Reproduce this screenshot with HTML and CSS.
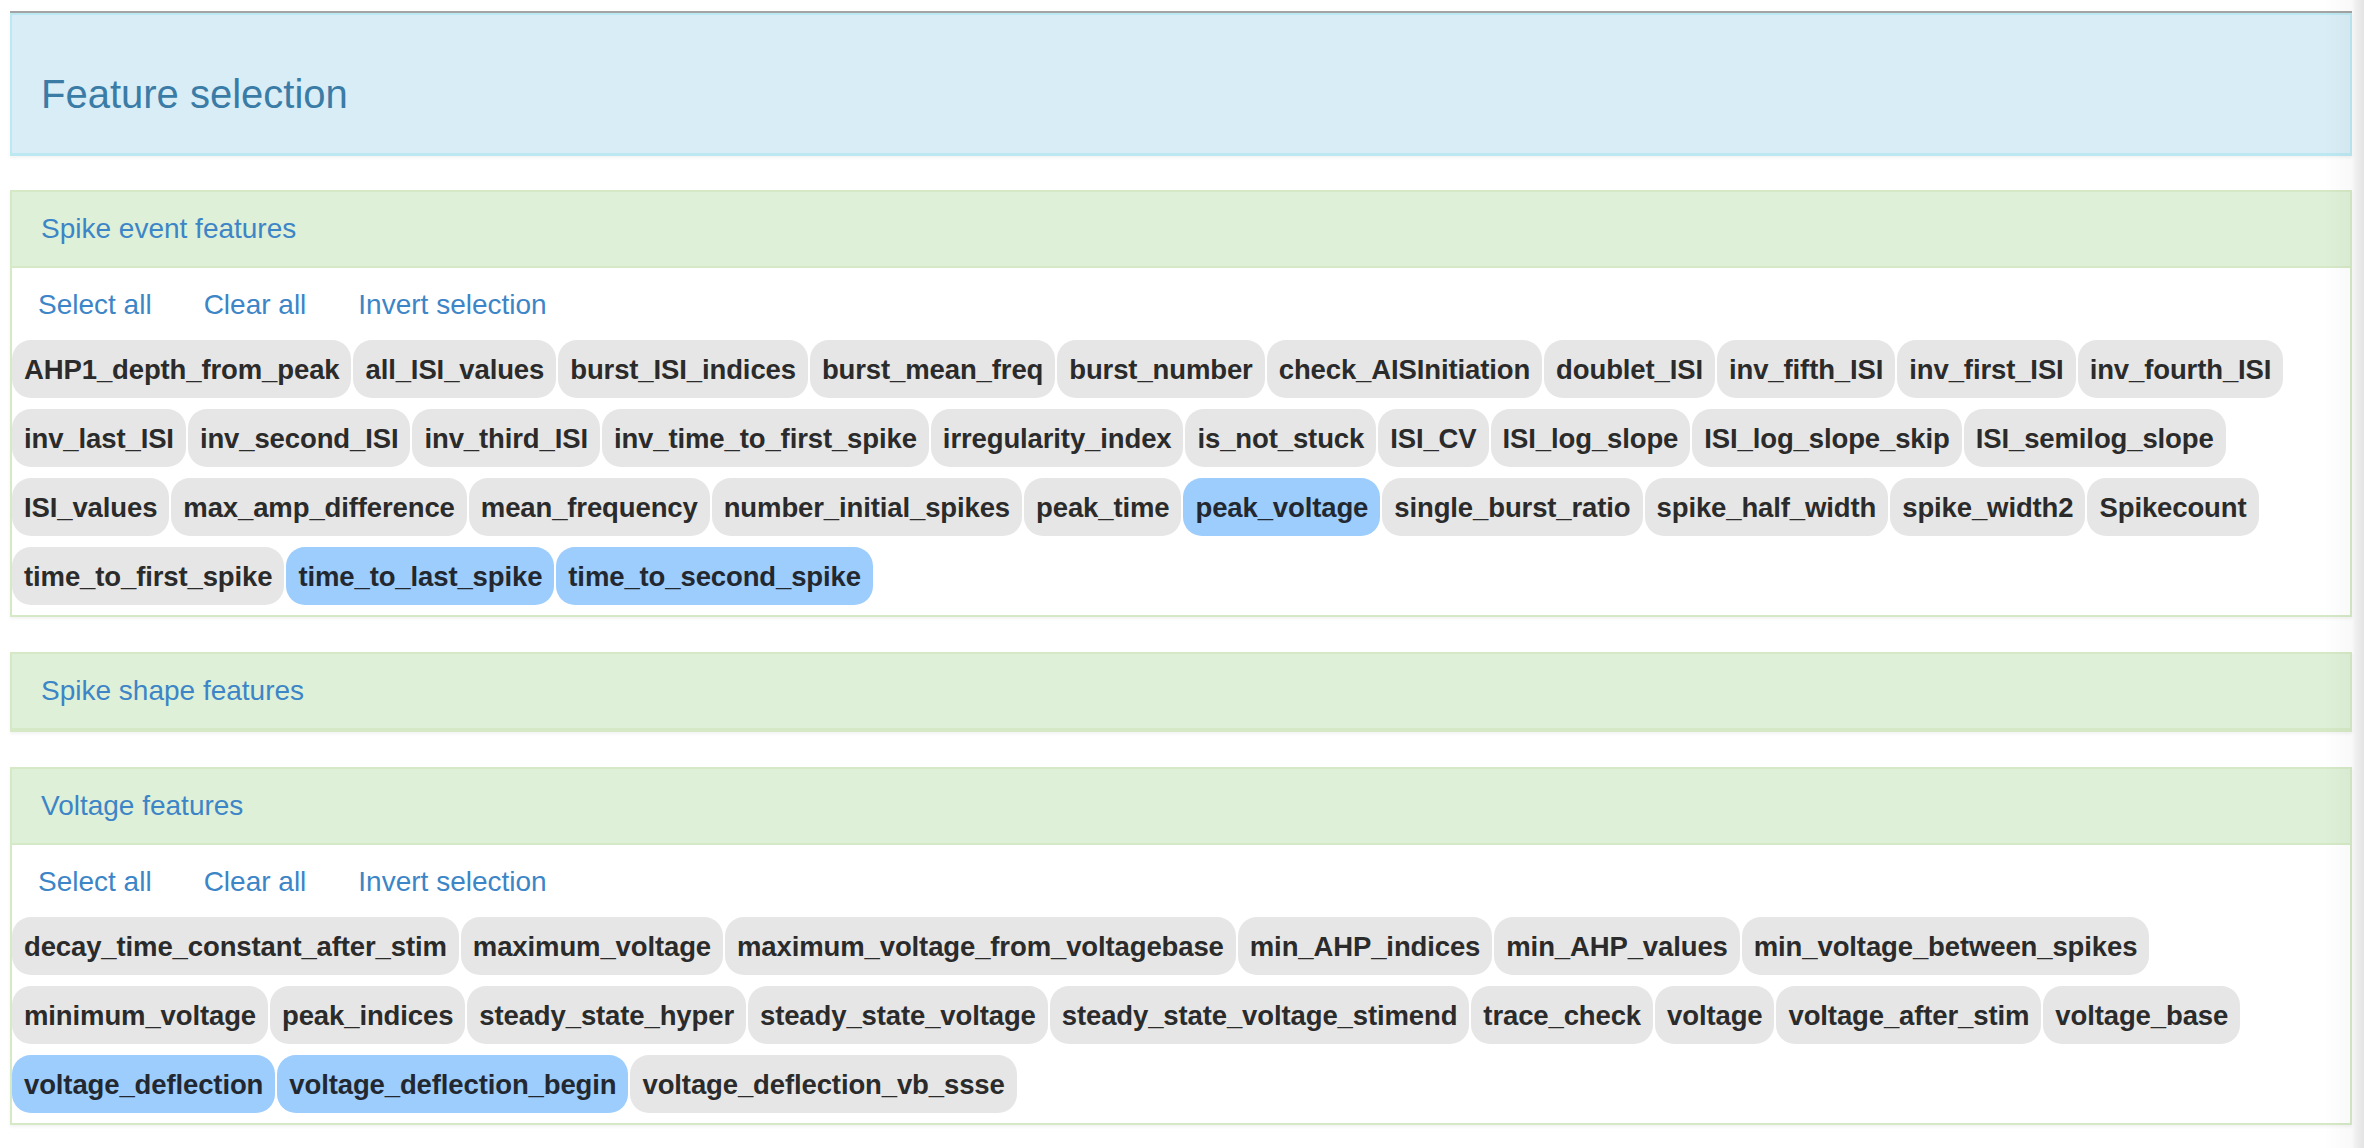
FILE: index.html
```html
<!DOCTYPE html>
<html lang="en">
<head>
<meta charset="utf-8">
<title>Feature selection</title>
<link rel="stylesheet" href="styles.css">
</head>
<body>
<div class="page">
  <div class="title-panel">
    <h1 class="title">Feature selection</h1>
  </div>

  <section class="panel">
    <div class="panel-heading"><a class="panel-title">Spike event features</a></div>
    <div class="panel-body">
      <div class="actions">
        <a class="action">Select all</a>
        <a class="action">Clear all</a>
        <a class="action">Invert selection</a>
      </div>
      <div class="chips">
        <span class="chip">AHP1_depth_from_peak</span>
        <span class="chip">all_ISI_values</span>
        <span class="chip">burst_ISI_indices</span>
        <span class="chip">burst_mean_freq</span>
        <span class="chip">burst_number</span>
        <span class="chip">check_AISInitiation</span>
        <span class="chip">doublet_ISI</span>
        <span class="chip">inv_fifth_ISI</span>
        <span class="chip">inv_first_ISI</span>
        <span class="chip">inv_fourth_ISI</span>
        <span class="chip">inv_last_ISI</span>
        <span class="chip">inv_second_ISI</span>
        <span class="chip">inv_third_ISI</span>
        <span class="chip">inv_time_to_first_spike</span>
        <span class="chip">irregularity_index</span>
        <span class="chip">is_not_stuck</span>
        <span class="chip">ISI_CV</span>
        <span class="chip">ISI_log_slope</span>
        <span class="chip">ISI_log_slope_skip</span>
        <span class="chip">ISI_semilog_slope</span>
        <span class="chip">ISI_values</span>
        <span class="chip">max_amp_difference</span>
        <span class="chip">mean_frequency</span>
        <span class="chip">number_initial_spikes</span>
        <span class="chip">peak_time</span>
        <span class="chip selected">peak_voltage</span>
        <span class="chip">single_burst_ratio</span>
        <span class="chip">spike_half_width</span>
        <span class="chip">spike_width2</span>
        <span class="chip">Spikecount</span>
        <span class="chip">time_to_first_spike</span>
        <span class="chip selected">time_to_last_spike</span>
        <span class="chip selected">time_to_second_spike</span>
      </div>
    </div>
  </section>

  <section class="panel">
    <div class="panel-heading"><a class="panel-title">Spike shape features</a></div>
  </section>

  <section class="panel">
    <div class="panel-heading"><a class="panel-title">Voltage features</a></div>
    <div class="panel-body">
      <div class="actions">
        <a class="action">Select all</a>
        <a class="action">Clear all</a>
        <a class="action">Invert selection</a>
      </div>
      <div class="chips">
        <span class="chip">decay_time_constant_after_stim</span>
        <span class="chip">maximum_voltage</span>
        <span class="chip">maximum_voltage_from_voltagebase</span>
        <span class="chip">min_AHP_indices</span>
        <span class="chip">min_AHP_values</span>
        <span class="chip">min_voltage_between_spikes</span>
        <span class="chip">minimum_voltage</span>
        <span class="chip">peak_indices</span>
        <span class="chip">steady_state_hyper</span>
        <span class="chip">steady_state_voltage</span>
        <span class="chip">steady_state_voltage_stimend</span>
        <span class="chip">trace_check</span>
        <span class="chip">voltage</span>
        <span class="chip">voltage_after_stim</span>
        <span class="chip">voltage_base</span>
        <span class="chip selected">voltage_deflection</span>
        <span class="chip selected">voltage_deflection_begin</span>
        <span class="chip">voltage_deflection_vb_ssse</span>
      </div>
    </div>
  </section>
</div>
</body>
</html>
```

FILE: styles.css
```css
html {
  background: #ffffff;
}

body {
  margin: 0;
  font-family: "Helvetica Neue", "Liberation Sans", Arial, sans-serif;
  color: #2d2d2d;
  background: linear-gradient(to right, #ffffff calc(100% - 12px), #f8f8f8 calc(100% - 9px), #f1f1f1 100%);
  min-height: 1148px;
}

body::after {
  content: "";
  position: fixed;
  top: 0;
  right: 0;
  width: 40px;
  height: 100%;
  pointer-events: none;
  background: linear-gradient(to right, rgba(0, 0, 0, 0) 0%, rgba(0, 0, 0, 0.025) 70%, rgba(0, 0, 0, 0.05) 100%);
}

.page {
  padding: 13px 12px 20px 10px;
  display: flex;
  flex-direction: column;
  gap: 35px;
}

.title-panel {
  background: #d9edf7;
  border: 2px solid #bce8f1;
  border-bottom-width: 3px;
  box-shadow: 0 -2px 0 #a4a4a4, 0 2px 3px rgba(0, 0, 0, 0.05);
  padding: 56px 29px 36px;
  margin-bottom: -1px;
}

.title {
  margin: 0;
  font-size: 40px;
  line-height: 46px;
  font-weight: 400;
  color: #3a7ca6;
}

.panel {
  border: 2px solid #d6e9c6;
  background: #ffffff;
  box-shadow: 0 2px 3px rgba(0, 0, 0, 0.05);
}

.panel-heading {
  background: #dff0d8;
  border-bottom: 2px solid #d6e9c6;
  padding: 20px 29px 20px;
}

.panel-title {
  display: block;
  font-size: 28px;
  line-height: 34px;
  color: #3c85c7;
  text-decoration: none;
}

.panel-body {
  padding: 17px 0 10px;
}

.actions {
  display: flex;
  gap: 0;
  margin-bottom: 15px;
}

.action {
  font-size: 28px;
  line-height: 40px;
  color: #3c85c7;
  padding: 0 25px 0 26px;
  text-decoration: none;
}

.action + .action {
  padding-left: 27px;
}

.chips {
  display: flex;
  flex-wrap: wrap;
  column-gap: 2px;
  row-gap: 11px;
}

.chip {
  display: inline-block;
  font-size: 27.5px;
  letter-spacing: -0.12px;
  font-weight: 700;
  line-height: 34px;
  padding: 13px 12px 11px;
  background: #e6e6e6;
  border-radius: 19px;
  color: #2b2b2b;
  white-space: nowrap;
}

.chip.selected {
  background: #9ccdfd;
  color: #232830;
}
```
